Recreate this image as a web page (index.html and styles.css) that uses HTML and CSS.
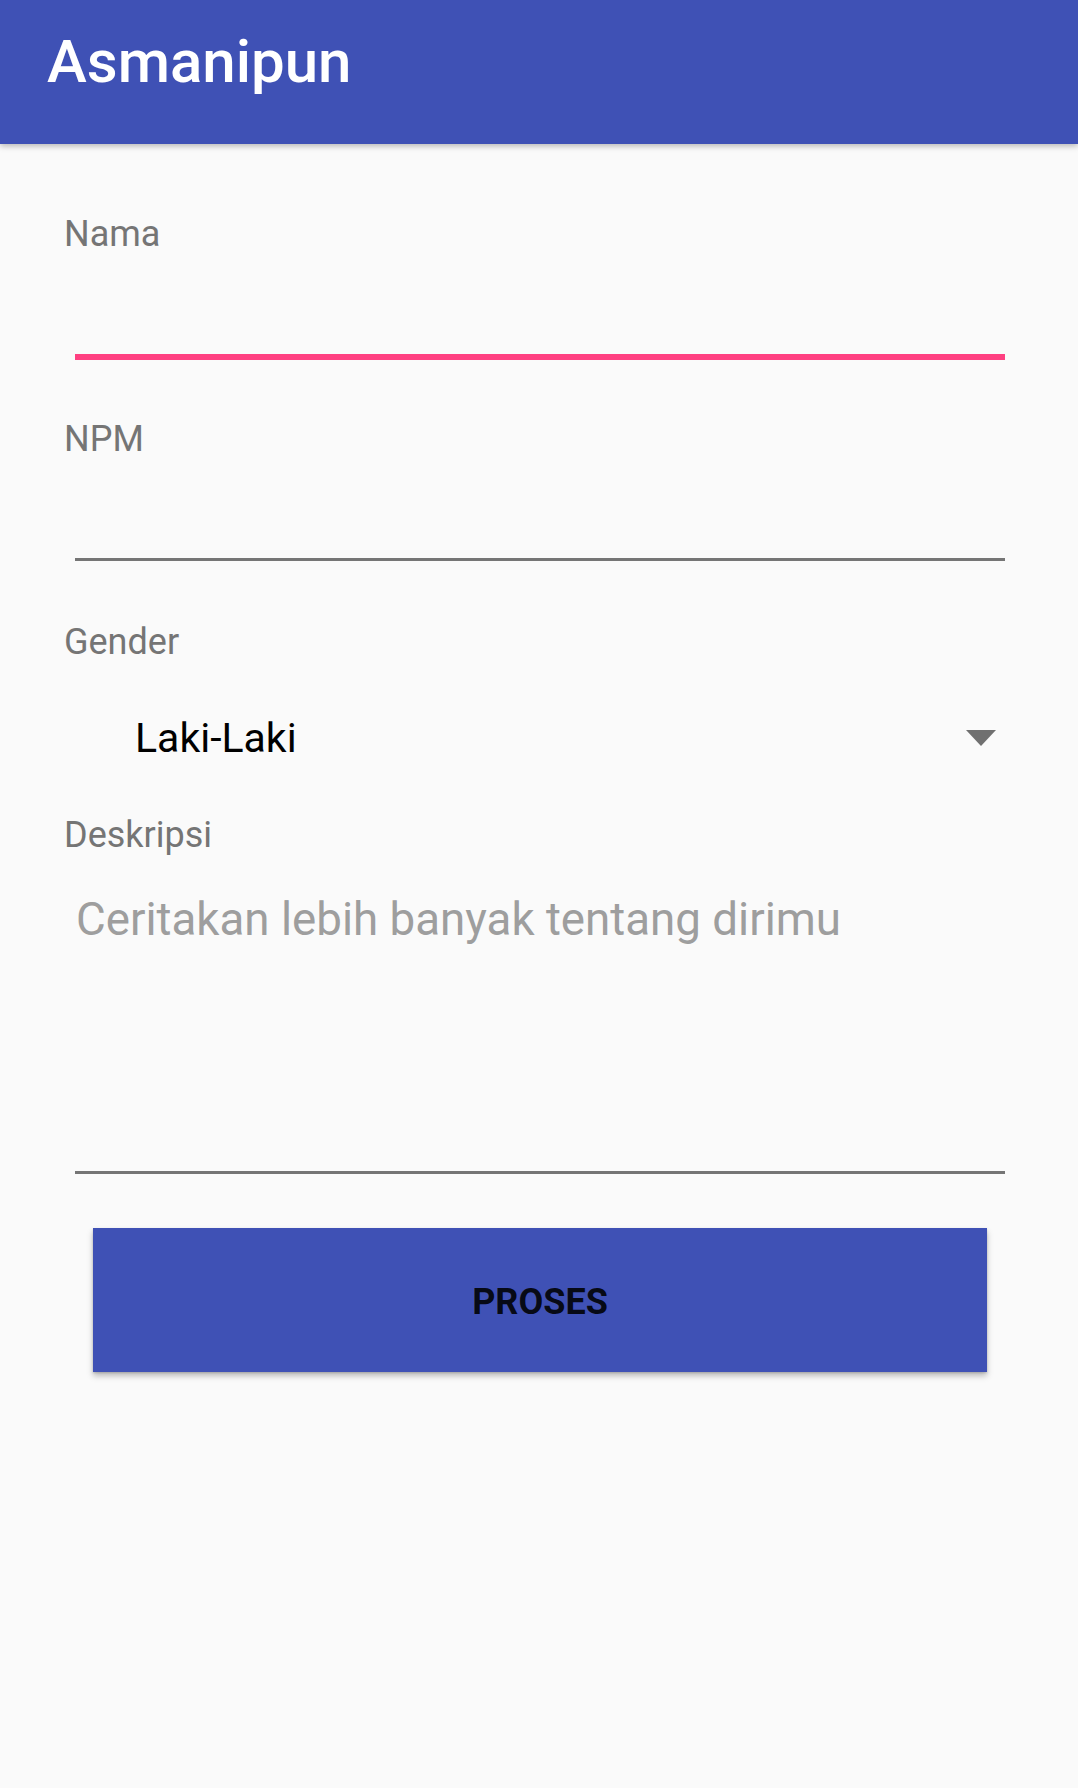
FILE: index.html
```html
<!DOCTYPE html>
<html lang="id">
<head>
<meta charset="utf-8">
<title>Asmanipun</title>
<link rel="stylesheet" href="styles.css">
</head>
<body>
<header class="appbar">
  <h1 class="appbar__title">Asmanipun</h1>
</header>
<main class="form">
  <div class="field field--first">
    <label class="field__label" for="nama">Nama</label>
    <input class="field__input field__input--focused field__input--nama" id="nama" type="text">
  </div>
  <div class="field">
    <label class="field__label" for="npm">NPM</label>
    <input class="field__input field__input--npm" id="npm" type="text">
  </div>
  <div class="field field--gender">
    <span class="field__label">Gender</span>
    <div class="spinner">
      <span class="spinner__value">Laki-Laki</span>
      <svg class="spinner__arrow" width="30" height="16" viewBox="0 0 30 16" aria-hidden="true"><polygon points="0,0 30,0 15,16" fill="#707070"/></svg>
    </div>
  </div>
  <div class="field field--desc">
    <label class="field__label" for="desc">Deskripsi</label>
    <textarea class="field__textarea" id="desc" placeholder="Ceritakan lebih banyak tentang dirimu"></textarea>
  </div>
  <button class="btn" type="button">PROSES</button>
</main>
</body>
</html>
```
FILE: styles.css
```css
html, body {
  margin: 0;
  padding: 0;
}

body {
  width: 1078px;
  min-height: 1788px;
  background: #fafafa;
  font-family: Roboto, "Liberation Sans", sans-serif;
}

.appbar {
  position: relative;
  z-index: 2;
  box-sizing: border-box;
  height: 144px;
  padding: 27px 0 0 47px;
  background: #3f51b5;
  box-shadow: 0 2px 6px rgba(0, 0, 0, 0.28);
}

.appbar__title {
  margin: 0;
  font-size: 60px;
  line-height: 70px;
  font-weight: 500;
  color: #ffffff;
}

.form {
  display: flex;
  flex-direction: column;
  padding: 69px 73px 0 64px;
}

.field {
  display: flex;
  flex-direction: column;
  margin-top: 58px;
}

.field--first {
  margin-top: 0;
}

.field--gender {
  margin-top: 60px;
}

.field--desc {
  margin-top: 55px;
}

.field__label {
  font-size: 36px;
  line-height: 42px;
  color: #757575;
}

.field__input {
  display: block;
  box-sizing: border-box;
  margin: 0 0 0 11px;
  padding: 0;
  border: 0;
  border-bottom: 3px solid #757575;
  background: transparent;
  outline: none;
  font-family: inherit;
  font-size: 46px;
}

.field__input--nama {
  height: 105px;
}

.field__input--focused {
  border-bottom: 6px solid #ff4081;
}

.field__input--npm {
  height: 101px;
}

.spinner {
  display: flex;
  align-items: center;
  justify-content: space-between;
  margin-top: 54px;
  padding: 0 9px 0 71px;
}

.spinner__value {
  font-size: 41px;
  line-height: 42px;
  color: #000000;
}

.spinner__arrow {
  display: block;
}

.field__textarea {
  display: block;
  box-sizing: border-box;
  height: 318px;
  margin: 0 0 0 11px;
  padding: 40px 0 0 1px;
  border: 0;
  border-bottom: 3px solid #757575;
  background: transparent;
  outline: none;
  resize: none;
  font-family: inherit;
  font-size: 45.7px;
  line-height: 48px;
  color: #000;
}

.field__textarea::placeholder {
  color: #9e9e9e;
}

.btn {
  display: flex;
  align-items: center;
  justify-content: center;
  box-sizing: border-box;
  width: 894px;
  height: 144px;
  margin: 54px 0 0 29px;
  padding: 3px 0 0 0;
  border: 0;
  background: #3f51b5;
  box-shadow: 0 4px 6px rgba(0, 0, 0, 0.25), 0 1px 2px rgba(0, 0, 0, 0.15);
  font-family: inherit;
  font-size: 36px;
  font-weight: 700;
  color: rgba(0, 0, 0, 0.88);
}
```
